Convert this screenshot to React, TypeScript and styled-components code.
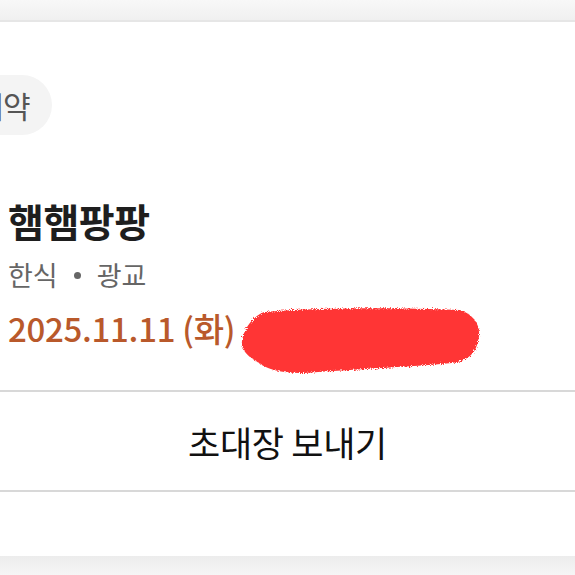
import * as React from 'react';
import styled, { createGlobalStyle } from 'styled-components';

const GlobalStyle = createGlobalStyle`
    html, body {
        margin: 0;
        padding: 0;
        background: #ffffff;
        font-family: "Noto Sans CJK KR", "Noto Sans", sans-serif;
        overflow: hidden;
    }
`;

const Page = styled.div`
    width: 575px;
    height: 575px;
    display: flex;
    flex-direction: column;
    background: #ffffff;
    overflow: hidden;
`;

const TopBand = styled.div`
    height: 20px;
    flex-shrink: 0;
    background: linear-gradient(#f8f8f8, #f0f0f0);
    border-bottom: 2px solid #e6e6e6;
`;

const Card = styled.div`
    display: flex;
    flex-direction: column;
    flex-shrink: 0;
`;

const Info = styled.div`
    display: flex;
    flex-direction: column;
    align-items: flex-start;
    padding: 53px 0 0 8px;
    height: 368px;
    box-sizing: border-box;
`;

const Chip = styled.div`
    display: flex;
    align-items: center;
    height: 60px;
    margin-left: -62px;
    padding: 0 22px 0 30px;
    border-radius: 30px;
    background: #f4f4f4;
    font-size: 30px;
    color: #555555;
    letter-spacing: -0.5px;
`;

const Title = styled.div`
    margin-top: 62px;
    font-size: 39px;
    font-weight: 700;
    line-height: 46px;
    color: #1e1e1e;
    letter-spacing: -0.5px;
`;

const Meta = styled.div`
    margin-top: 14px;
    font-size: 27px;
    line-height: 36px;
    color: #666666;
    display: flex;
    align-items: center;
    gap: 16px;
`;

const Dot = styled.span`
    width: 7px;
    height: 7px;
    border-radius: 50%;
    background: #666666;
`;

const DateRow = styled.div`
    position: relative;
    margin-top: 15px;
    display: flex;
    align-items: center;
    font-size: 33px;
    line-height: 40px;
    font-weight: 500;
    color: #b9592b;
    letter-spacing: -0.3px;
`;

const Scribble = styled.svg`
    position: absolute;
    left: 230px;
    top: -3px;
`;

const Divider = styled.div`
    height: 2px;
    background: #d8d8d8;
    flex-shrink: 0;
`;

const ActionButton = styled.div`
    height: 98px;
    display: flex;
    align-items: center;
    justify-content: center;
    font-size: 35px;
    color: #111111;
    letter-spacing: -0.3px;
`;

const Spacer = styled.div`
    height: 64px;
    flex-shrink: 0;
`;

const BottomBand = styled.div`
    flex: 1;
    background: linear-gradient(#ececec, #f6f6f6);
`;

const RedScribble = () => (
    <Scribble width="246" height="74" viewBox="0 0 246 74">
        <defs>
            <filter id="rough" x="-10%" y="-20%" width="120%" height="140%">
                <feTurbulence type="fractalNoise" baseFrequency="0.9" numOctaves="2" seed="3" />
                <feDisplacementMap in="SourceGraphic" scale="5" />
            </filter>
        </defs>
        <path
            d="M4 36 C 6 24, 14 12, 26 7 C 70 3, 150 2, 222 5 C 238 10, 244 24, 240 36 C 238 48, 230 56, 214 58 C 170 62, 120 64, 80 67 C 50 70, 30 66, 18 56 C 8 50, 3 44, 4 36 Z"
            fill="#ff3636"
            filter="url(#rough)"
        />
    </Scribble>
);

export default function App() {
    return (
        <Page>
            <GlobalStyle />
            <TopBand />
            <Card>
                <Info>
                    <Chip>예약</Chip>
                    <Title>햄햄팡팡</Title>
                    <Meta>
                        <span>한식</span>
                        <Dot />
                        <span>광교</span>
                    </Meta>
                    <DateRow>
                        <span>2025.11.11 (화)</span>
                        <RedScribble />
                    </DateRow>
                </Info>
                <Divider />
                <ActionButton>초대장 보내기</ActionButton>
                <Divider />
                <Spacer />
            </Card>
            <BottomBand />
        </Page>
    );
}
